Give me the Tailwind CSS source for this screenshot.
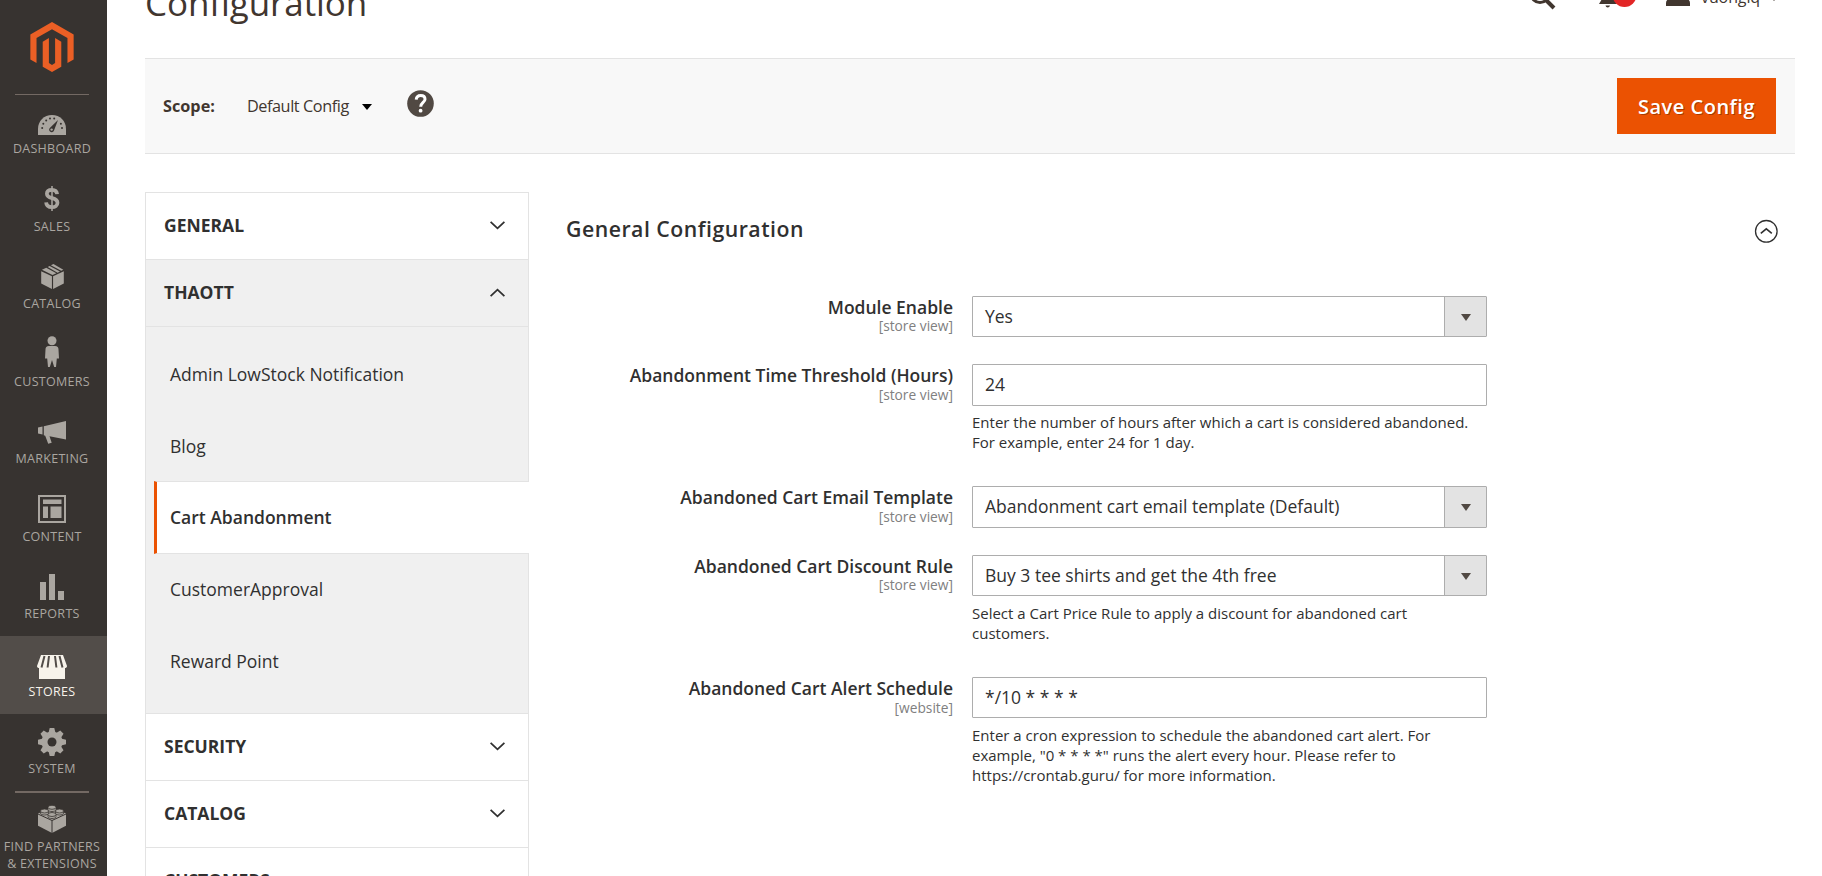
<!DOCTYPE html>
<html lang="en">
<head>
<meta charset="utf-8">
<title>Configuration</title>
<script src="https://cdn.jsdelivr.net/npm/@tailwindcss/browser@4"></script>
</head>
<body class="h-[876px] w-[1822px] overflow-hidden bg-white font-['Open_Sans',sans-serif] text-[#303030]">
<div class="flex h-full">
  <!-- Admin menu -->
  <aside class="h-full w-[107px] shrink-0 overflow-hidden bg-[#373330] text-[12.5px] leading-[17px] tracking-[0.3px] text-[#aaa6a0]">
    <div class="flex h-[94px] w-[104px] justify-center pt-[22px]">
      <svg class="size-[50px]" viewBox="0 0 24 24" fill="#eb5f25"><path d="M12 24l-4.455-2.572v-12l2.97-1.715v12.001l1.485.902 1.485-.902V7.713l2.971 1.715v12L12 24zM22.391 6v12l-2.969 1.714V7.713L12 3.43 4.574 7.713v12.001L1.609 18V6L12 0l10.391 6z"/></svg>
    </div>
    <div class="ml-[15px] h-px w-[74px] bg-[#736963]"></div>
    <nav>
      <a class="flex h-[76px] flex-col items-center pt-[20px] pr-[3px]">
        <svg class="h-[20px] w-[28px]" viewBox="0 0 28 20"><path fill="#aaa6a0" d="M0 20v-6C0 6 6 0 14 0s14 6 14 14v6z"/><g fill="#373330"><circle cx="4.2" cy="13" r="1"/><circle cx="5.3" cy="8.8" r="1"/><circle cx="8.2" cy="5.4" r="1"/><circle cx="12" cy="3.6" r="1"/><circle cx="16.2" cy="3.6" r="1"/><circle cx="22.9" cy="8.8" r="1"/><circle cx="24" cy="13" r="1"/><path d="M20 5l-4 10.500a2.500 2.500 0 1 1-4.200-2.500z"/></g><circle cx="13.600" cy="14.600" r="1.200" fill="#aaa6a0"/></svg>
        <span class="mt-[5px]">DASHBOARD</span>
      </a>
      <a class="flex h-[77px] flex-col items-center pt-[15px] pr-[3px]">
        <svg class="h-[25px] w-[16px]" viewBox="0 0 16 26"><path fill="none" stroke="#aaa6a0" stroke-width="3.900" d="M13.300 8.500C13 5.300 11 4 8 4 4.800 4 2.700 5.500 2.700 8c0 6.200 11 3 11 9.300 0 3-2.400 4.700-5.700 4.700-3.600 0-5.900-1.700-6.100-5"/><path stroke="#aaa6a0" stroke-width="1.600" d="M8 0v26"/></svg>
        <span class="mt-[7px]">SALES</span>
      </a>
      <a class="flex h-[78px] flex-col items-center pt-[16px] pr-[3px]">
        <svg class="h-[25px] w-[23px]" viewBox="0 0 24 26" fill="#aaa6a0"><path d="M.2 7.400l11.200 5.300V26L.2 20.400zM23.800 7.400l-11.200 5.300V26l11.200-5.600zM1 6l4.500-2.200L16 9.500l-4 1.900zM7 3l2-.9 10.800 5.700-2.500 1.200zM10.300 1.300L13 0l10.300 5.900-2.200 1.100z"/></svg>
        <span class="mt-[6px]">CATALOG</span>
      </a>
      <a class="flex h-[77px] flex-col items-center pt-[10px] pr-[3px]">
        <svg class="h-[31px] w-[14px]" viewBox="0 0 14 31" fill="#aaa6a0"><circle cx="7" cy="4.700" r="4.500"/><path d="M4 10h6c2.500 0 3.500 1.200 3.500 3.500l.5 9h-2.200L11 31H9.200L7 24l-2.200 7H3l-.8-8.500H0l.5-9C.5 11.200 1.500 10 4 10z"/></svg>
        <span class="mt-[6px]">CUSTOMERS</span>
      </a>
      <a class="flex h-[78px] flex-col items-center pt-[18px] pr-[3px]">
        <svg class="h-[23px] w-[28px]" viewBox="0 0 28 23" fill="#aaa6a0"><path d="M0 6.500l4.500-.9v8L0 12.600zM5.800 5.200L28 0v18.500l-16.500-3.300 2.200 6.600-3.500 1-3-8-1.400-.6z"/></svg>
        <span class="mt-[6px]">MARKETING</span>
      </a>
      <a class="flex h-[77px] flex-col items-center pt-[14px] pr-[3px]">
        <svg class="size-[28px]" viewBox="0 0 28 28" fill="#aaa6a0"><path fill="none" stroke="#aaa6a0" stroke-width="2" d="M1 1h26v26H1z"/><path d="M5 4.500h18.500v4.500H5zM5 11.500h5v11.500H5zM12.500 11.500h11v11.500h-11z"/></svg>
        <span class="mt-[5px]">CONTENT</span>
      </a>
      <a class="flex h-[78px] flex-col items-center pt-[16px] pr-[3px]">
        <svg class="h-[26px] w-[24px]" viewBox="0 0 24 26" fill="#aaa6a0"><path d="M0 8h6v18H0zM9 0h6v26H9zM18 17h6v9h-6z"/></svg>
        <span class="mt-[5px]">REPORTS</span>
      </a>
      <a class="flex h-[78px] flex-col items-center bg-[#524d49] pt-[19px] pr-[3px] text-[#f7f3eb]">
        <svg class="h-[24px] w-[30px]" viewBox="0 0 30 24" fill="#f7f3eb"><path d="M2 13h26v11H2zM4 0h22l4 11c0 1.500-1 2-2.300 2H2.300C1 13 0 12.500 0 11z"/><g fill="none" stroke="#524d49" stroke-width="2"><path d="M7.500 1L4.500 12.500M12 1l-1.400 11.500M18 1l1.400 11.500M22.500 1l3 11.500"/></g></svg>
        <span class="mt-[4px]">STORES</span>
      </a>
      <a class="flex h-[77px] flex-col items-center pt-[14px] pr-[3px]">
        <svg class="size-[28px]" viewBox="0 0 28 28"><g fill="#aaa6a0"><circle cx="14" cy="14" r="10.500"/><path d="M11.700 0h4.600l1.200 5h-7zM11.700 28h4.600l1.200-5h-7z"/><path transform="rotate(45 14 14)" d="M11.700 0h4.600l1.200 5h-7zM11.700 28h4.600l1.200-5h-7z"/><path transform="rotate(90 14 14)" d="M11.700 0h4.600l1.200 5h-7zM11.700 28h4.600l1.200-5h-7z"/><path transform="rotate(135 14 14)" d="M11.700 0h4.600l1.200 5h-7zM11.700 28h4.600l1.200-5h-7z"/></g><circle cx="14" cy="14" r="4.500" fill="#373330"/></svg>
        <span class="mt-[4px]">SYSTEM</span>
      </a>
      <div class="ml-[15px] h-[2px] w-[74px] bg-[#736963]"></div>
      <a class="flex flex-col items-center pt-[12px] pr-[3px] text-center">
        <svg class="h-[28px] w-[28px]" viewBox="0 0 28 28"><path fill="#aaa6a0" d="M0 8.500L14 3l14 5.500v12.200L14 28 0 20.700z"/><path fill="none" stroke="#373330" stroke-width="1" d="M0 9l14 6.500L28 9M14 15.500V28"/><g fill="#aaa6a0" stroke="#373330" stroke-width=".8"><path d="M10 2.500v2.200c0 2.400 8 2.400 8 0V2.500M2.500 6v2.200c0 2.400 8 2.400 8 0V6M17.500 6v2.200c0 2.400 8 2.400 8 0V6M10 9.500v2.200c0 2.400 8 2.400 8 0V9.500"/><ellipse cx="14" cy="2.300" rx="4" ry="2"/><ellipse cx="6.500" cy="6" rx="4" ry="2"/><ellipse cx="21.500" cy="6" rx="4" ry="2"/><ellipse cx="14" cy="9.500" rx="4" ry="2"/></g></svg>
        <span class="mt-[5px] whitespace-nowrap">FIND PARTNERS<br>&amp; EXTENSIONS</span>
      </a>
    </nav>
  </aside>

  <main class="ml-[38px] flex w-[1650px] flex-col">
    <!-- Page header, scrolled partly out of view -->
    <header class="flex h-[58px] shrink-0 items-start overflow-hidden text-[#41362f]">
      <h1 class="-mt-[21px] text-[35px] leading-[48px] font-normal tracking-[-0.08px]">Configuration</h1>
      <div class="ml-auto flex w-[265px] items-start">
        <svg class="-mt-[18px] -ml-px h-[28px] w-[27px]" viewBox="0 0 27 28" fill="none" stroke="#41362f"><circle cx="11" cy="11.500" r="9" stroke-width="3"/><path stroke-width="4" d="M17 18l8 8"/></svg>
        <svg class="-mt-[18px] ml-[43px] h-[26px] w-[40px]" viewBox="0 0 40 26"><path fill="#41362f" d="M0 22l3-5v-7c0-5 3-8 6-8s6 3 6 8v7l3 5zM6.500 23.500h4.500c-.5 2.500-4 2.500-4.500 0z"/><circle cx="25.500" cy="13" r="12" fill="#e22626"/></svg>
        <svg class="-mt-[18px] ml-[27px] h-[24px] w-[24px]" viewBox="0 0 24 24" fill="#41362f"><circle cx="12" cy="7" r="7"/><path d="M0 24v-3c0-4 5-6 12-6s12 2 12 6v3z"/></svg>
        <span class="-mt-[14px] ml-[11px] text-[16px] leading-[22px] tracking-[-0.1px]">vuongiq</span>
        <svg class="-mt-[5px] ml-[9px] h-[6px] w-[10px]" viewBox="0 0 10 6" fill="#41362f"><path d="M0 0h10L5 6z"/></svg>
      </div>
    </header>

    <section class="flex h-[96px] shrink-0 items-center border-y border-[#e3e3e3] bg-[#f8f8f8] pr-[19px] pl-[18px]">
      <span class="text-[16.25px] font-bold text-[#41362f]">Scope:</span>
      <span class="ml-[32px] text-[16.25px] tracking-[-0.42px] text-[#41362f]">Default Config</span>
      <svg class="mt-[2px] ml-[13px] h-[6px] w-[10px]" viewBox="0 0 10 6"><path d="M0 0h10L5 6z"/></svg>
      <svg class="-mt-[5px] ml-[35px] size-[27px]" viewBox="0 0 27 27"><circle cx="13.500" cy="13.500" r="13.300" fill="#514943"/><path fill="none" stroke="#fff" stroke-width="3" d="M9.200 9.700c.3-3 2.200-4.200 4.500-4.200 2.600 0 4.300 1.500 4.300 3.700 0 3.200-4.300 3.300-4.300 7.600"/><circle cx="13.600" cy="20.700" r="1.900" fill="#fff"/></svg>
      <button class="ml-auto h-[56px] w-[159px] bg-[#eb5202] pt-[2px] text-[20px] font-semibold tracking-[0.5px] text-white [text-shadow:1px_1px_0_rgba(0,0,0,0.3)]">Save Config</button>
    </section>

    <div class="mt-[38px] flex">
      <!-- Section tabs -->
      <nav class="w-[384px] shrink-0 border border-[#e3e3e3] text-[17.5px]">
        <div class="flex h-[67px] items-center justify-between border-b border-[#e3e3e3] pr-[23px] pb-[2px] pl-[18px] font-bold"><span>GENERAL</span><svg class="h-[9px] w-[15px]" viewBox="0 0 15 9" fill="none" stroke="#303030" stroke-width="1.800"><path d="M.6.8l6.900 6.500L14.400.8"/></svg></div>
        <div class="flex h-[67px] items-center justify-between border-b border-[#e3e3e3] bg-[#f0f0f0] pr-[23px] pb-[2px] pl-[18px] font-bold"><span>THAOTT</span><svg class="h-[9px] w-[15px]" viewBox="0 0 15 9" fill="none" stroke="#303030" stroke-width="1.800"><path d="M.6 8.200l6.900-6.500 6.900 6.500"/></svg></div>
        <div class="h-[387px] border-b border-[#e3e3e3] bg-[#f0f0f0] pt-[11px]">
          <div class="flex h-[72px] items-center pl-[24px]">Admin LowStock Notification</div>
          <div class="flex h-[71px] items-center pt-[2px] pl-[24px]">Blog</div>
          <div class="-mr-px ml-[8px] flex h-[73px] items-center border-y border-l-[3px] border-y-[#e3e3e3] border-l-[#eb5202] bg-white pl-[13px] font-semibold">Cart Abandonment</div>
          <div class="flex h-[71px] items-center pl-[24px]">CustomerApproval</div>
          <div class="flex h-[72px] items-center pl-[24px]">Reward Point</div>
        </div>
        <div class="flex h-[67px] items-center justify-between border-b border-[#e3e3e3] pr-[23px] pb-[2px] pl-[18px] font-bold"><span>SECURITY</span><svg class="h-[9px] w-[15px]" viewBox="0 0 15 9" fill="none" stroke="#303030" stroke-width="1.800"><path d="M.6.8l6.900 6.500L14.400.8"/></svg></div>
        <div class="flex h-[67px] items-center justify-between border-b border-[#e3e3e3] pr-[23px] pb-[2px] pl-[18px] font-bold"><span>CATALOG</span><svg class="h-[9px] w-[15px]" viewBox="0 0 15 9" fill="none" stroke="#303030" stroke-width="1.800"><path d="M.6.8l6.900 6.500L14.400.8"/></svg></div>
        <div class="flex h-[67px] items-center justify-between pr-[23px] pb-[2px] pl-[18px] font-bold"><span>CUSTOMERS</span></div>
      </nav>

      <!-- Settings form -->
      <section class="ml-[38px] flex-1">
        <div class="flex h-[104px] items-start justify-between pr-[17px]">
          <h2 class="mt-[22px] -ml-px text-[21.25px] leading-[30px] font-semibold tracking-[0.5px]">General Configuration</h2>
          <svg class="mt-[27px] size-[24px]" viewBox="0 0 24 24" fill="none" stroke="#303030"><circle cx="12.300" cy="12.300" r="10.800" stroke-width="1.300"/><path stroke-width="1.600" d="M6.800 14.300l5.500-4.500 5.500 4.500"/></svg>
        </div>
        <div class="grid grid-cols-[386px_515px] grid-rows-[68px_122px_69px_122px_110px] gap-x-[19px] text-[17.5px]">
          <div class="text-right"><div class="leading-[23px] font-semibold">Module Enable</div><div class="-mt-px text-[13.75px] leading-[16px] text-[#808080]">[store view]</div></div>
          <div><div class="flex h-[41px] rounded-[1px] border border-[#adadad]"><span class="flex-1 pl-[12px] leading-[38px]">Yes</span><span class="flex w-[42px] items-center justify-center border-l border-[#adadad] bg-[#e3e3e3]"><svg class="mt-[2px] h-[7px] w-[10px]" viewBox="0 0 10 7" fill="#514943"><path d="M0 0h10L5 7z"/></svg></span></div></div>

          <div class="text-right"><div class="leading-[23px] font-semibold">Abandonment Time Threshold (Hours)</div><div class="text-[13.75px] leading-[16px] text-[#808080]">[store view]</div></div>
          <div><div class="h-[42px] rounded-[1px] border border-[#adadad] pl-[12px] leading-[39px]">24</div><p class="mt-[6px] text-[15px] leading-[20px]">Enter the number of hours after which a cart is considered abandoned.<br>For example, enter 24 for 1 day.</p></div>

          <div class="text-right"><div class="leading-[23px] font-semibold">Abandoned Cart Email Template</div><div class="text-[13.75px] leading-[16px] text-[#808080]">[store view]</div></div>
          <div><div class="flex h-[42px] rounded-[1px] border border-[#adadad]"><span class="flex-1 pl-[12px] leading-[39px]">Abandonment cart email template (Default)</span><span class="flex w-[42px] items-center justify-center border-l border-[#adadad] bg-[#e3e3e3]"><svg class="mt-px h-[7px] w-[10px]" viewBox="0 0 10 7" fill="#514943"><path d="M0 0h10L5 7z"/></svg></span></div></div>

          <div class="text-right"><div class="leading-[23px] font-semibold">Abandoned Cart Discount Rule</div><div class="-mt-px text-[13.75px] leading-[16px] text-[#808080]">[store view]</div></div>
          <div><div class="flex h-[41px] rounded-[1px] border border-[#adadad]"><span class="flex-1 pl-[12px] leading-[39px]">Buy 3 tee shirts and get the 4th free</span><span class="flex w-[42px] items-center justify-center border-l border-[#adadad] bg-[#e3e3e3]"><svg class="mt-[2px] h-[7px] w-[10px]" viewBox="0 0 10 7" fill="#514943"><path d="M0 0h10L5 7z"/></svg></span></div><p class="mt-[7px] text-[15px] leading-[20px]">Select a Cart Price Rule to apply a discount for abandoned cart<br>customers.</p></div>

          <div class="text-right"><div class="leading-[23px] font-semibold">Abandoned Cart Alert Schedule</div><div class="text-[13.75px] leading-[16px] text-[#808080]">[website]</div></div>
          <div><div class="h-[41px] rounded-[1px] border border-[#adadad] pl-[12px] leading-[39px]">*/10 * * * *</div><p class="mt-[7px] text-[15px] leading-[20px]">Enter a cron expression to schedule the abandoned cart alert. For<br>example, "0 * * * *" runs the alert every hour. Please refer to<br>https://crontab.guru/ for more information.</p></div>
        </div>
      </section>
    </div>
  </main>
</div>
</body>
</html>
